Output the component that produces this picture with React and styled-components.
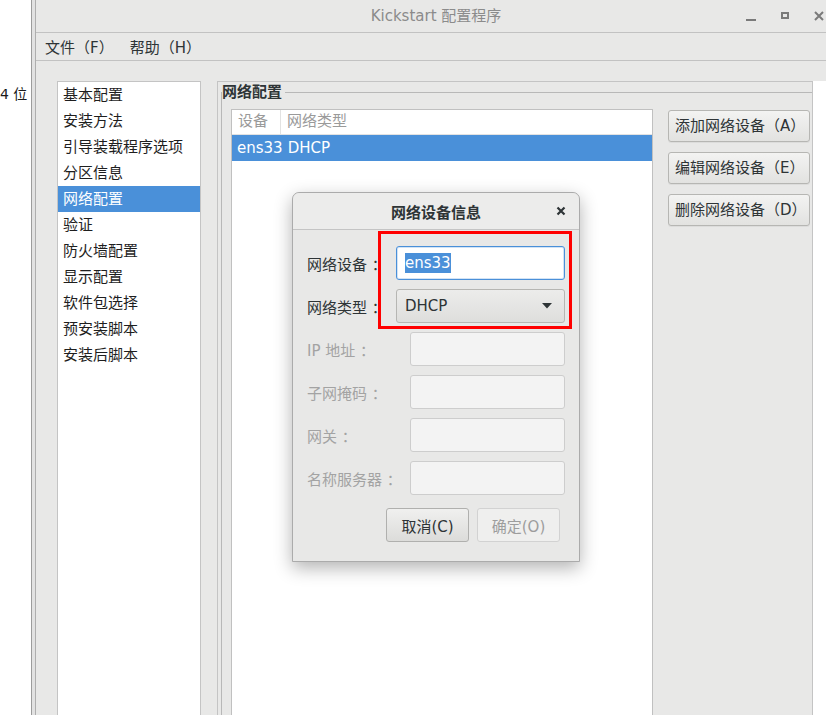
import styled, { createGlobalStyle } from 'styled-components';

const GlobalStyle = createGlobalStyle`
  html, body {
    margin: 0;
    padding: 0;
    background: #ffffff;
    overflow: hidden;
  }
  body {
    font-family: "DejaVu Sans", "Noto Sans CJK SC", sans-serif;
    font-size: 15px;
    color: #2e3436;
  }
`;

const navItems = [
  '基本配置', '安装方法', '引导装载程序选项', '分区信息', '网络配置',
  '验证', '防火墙配置', '显示配置', '软件包选择', '预安装脚本', '安装后脚本',
];

const fields = [
  { label: 'IP 地址 ：', indent: 103 },
  { label: '子网掩码 ：', indent: 103 },
  { label: '网关 ：', indent: 103 },
  { label: '名称服务器 ：', indent: 103 },
];

function App() {
  return (
    <Screen>
      <GlobalStyle />
      <Outside>
        <OutsideText>4 位</OutsideText>
      </Outside>
      <Edge />
      <Window>
        <TitleBar>
          <span />
          <Title>Kickstart 配置程序</Title>
          <Controls>
            <CtrlButton>
              <svg width="12" height="12" viewBox="0 0 12 12">
                <rect x="1" y="9" width="10" height="2" fill="#7a7a7a" />
              </svg>
            </CtrlButton>
            <CtrlButton>
              <svg width="12" height="12" viewBox="0 0 12 12">
                <rect x="3" y="3" width="6" height="5" fill="none" stroke="#7a7a7a" strokeWidth="2" />
              </svg>
            </CtrlButton>
            <CtrlButton>
              <svg width="12" height="12" viewBox="0 0 12 12">
                <path d="M2 2 L10 10 M10 2 L2 10" stroke="#7a7a7a" strokeWidth="2" />
              </svg>
            </CtrlButton>
          </Controls>
        </TitleBar>

        <MenuBar>
          <MenuItem>文件（F）</MenuItem>
          <MenuItem>帮助（H）</MenuItem>
        </MenuBar>

        <Body>
          <NavList>
            {navItems.map((item) => (
              <NavItem key={item} $active={item === '网络配置'}>{item}</NavItem>
            ))}
          </NavList>

          <Panel>
            <Frame>
              <Legend>网络配置</Legend>
              <Table>
                <HeaderRow>
                  <HeaderCell $w={49} $divider>设备</HeaderCell>
                  <HeaderCell>网络类型</HeaderCell>
                </HeaderRow>
                <Row $selected>
                  <Cell $w={49}>ens33</Cell>
                  <Cell>DHCP</Cell>
                </Row>
              </Table>
              <SideButtons>
                <SideButton>添加网络设备（A）</SideButton>
                <SideButton>编辑网络设备（E）</SideButton>
                <SideButton>删除网络设备（D）</SideButton>
              </SideButtons>
            </Frame>
          </Panel>

          <Gutter />
        </Body>
      </Window>

      <Dialog>
        <DialogHeader>
          <DialogTitle>网络设备信息</DialogTitle>
          <CloseButton>
            <svg width="10" height="10" viewBox="0 0 10 10">
              <path d="M1.5 1.5 L8.5 8.5 M8.5 1.5 L1.5 8.5" stroke="#2e3436" strokeWidth="2.2" />
            </svg>
          </CloseButton>
        </DialogHeader>

        <Form>
          <FieldRow $indent={89}>
            <FieldLabel>网络设备 ：</FieldLabel>
            <TextInput $focused>
              <Selected>ens33</Selected>
            </TextInput>
          </FieldRow>
          <FieldRow $indent={89}>
            <FieldLabel>网络类型 ：</FieldLabel>
            <Combo>
              <span>DHCP</span>
              <svg width="10" height="6" viewBox="0 0 10 6">
                <path d="M0 0 L10 0 L5 5.5 Z" fill="#2e3436" />
              </svg>
            </Combo>
          </FieldRow>
          {fields.map((f) => (
            <FieldRow key={f.label} $indent={f.indent}>
              <FieldLabel $disabled>{f.label}</FieldLabel>
              <TextInput $disabled />
            </FieldRow>
          ))}
        </Form>

        <DialogButtons>
          <DialogButton>取消(C)</DialogButton>
          <DialogButton $disabled>确定(O)</DialogButton>
        </DialogButtons>
      </Dialog>

      <Highlight />
    </Screen>
  );
}

export default App;

const Screen = styled.div`
  position: relative;
  display: flex;
  width: 826px;
  height: 715px;
  overflow: hidden;
  background: #ffffff;
`;

const Outside = styled.div`
  flex: 0 0 31px;
  background: #ffffff;
  padding-top: 83px;
  box-sizing: border-box;
`;

const OutsideText = styled.div`
  font-size: 14px;
  color: #1a1a1a;
  white-space: nowrap;
`;

const Edge = styled.div`
  flex: 0 0 3px;
  border-left: 1px solid #9c9c9c;
  border-right: 1px solid #aeaeae;
  background: #e2e2e2;
`;

const Window = styled.div`
  flex: 0 0 800px;
  display: flex;
  flex-direction: column;
  background: #e8e8e7;
`;

const TitleBar = styled.div`
  height: 32px;
  border-bottom: 1px solid #c2c2c2;
  display: grid;
  grid-template-columns: 1fr auto 1fr;
  align-items: center;
`;

const Title = styled.div`
  color: #8b8b8b;
  font-size: 15px;
  padding-bottom: 3px;
`;

const Controls = styled.div`
  justify-self: end;
  display: flex;
  align-items: center;
`;

const CtrlButton = styled.div`
  width: 34px;
  height: 28px;
  display: flex;
  align-items: center;
  justify-content: center;
`;

const MenuBar = styled.div`
  height: 27px;
  border-bottom: 1px solid #c2c2c2;
  display: flex;
  align-items: center;
  gap: 16px;
  padding-left: 9px;
`;

const MenuItem = styled.div`
  color: #2e3436;
  font-size: 15px;
`;

const Body = styled.div`
  flex: 1;
  display: flex;
  padding: 20px 0 0 21px;
  gap: 16px;
`;

const NavList = styled.div`
  flex: 0 0 144px;
  box-sizing: border-box;
  background: #ffffff;
  border: 1px solid #c4c4c4;
  border-bottom: none;
`;

const NavItem = styled.div`
  height: 26px;
  line-height: 26px;
  padding-left: 5px;
  white-space: nowrap;
  color: ${(p) => (p.$active ? '#ffffff' : '#1e1e1e')};
  background: ${(p) => (p.$active ? '#4a90d9' : 'transparent')};
`;

const Panel = styled.div`
  flex: 0 0 596px;
  box-sizing: border-box;
  border: 1px solid #c4c4c4;
  border-bottom: none;
  padding: 10px 0 0 3px;
  display: flex;
`;

const Frame = styled.div`
  position: relative;
  flex: 1;
  display: flex;
  align-items: flex-start;
  gap: 15px;
  border-top: 1px solid #b8b8b8;
  border-left: 1px solid #b8b8b8;
  padding: 16px 0 0 9px;
`;

const Legend = styled.div`
  position: absolute;
  top: -11px;
  left: 0;
  padding-right: 3px;
  background: #e8e8e7;
  font-weight: bold;
  font-size: 15px;
  color: #2e3436;
  line-height: 20px;
`;

const Table = styled.div`
  flex: 0 0 422px;
  box-sizing: border-box;
  align-self: stretch;
  background: #ffffff;
  border: 1px solid #c0c0c0;
  border-bottom: none;
`;

const HeaderRow = styled.div`
  display: flex;
  height: 24px;
  border-bottom: 1px solid #e2e2e2;
`;

const HeaderCell = styled.div`
  ${(p) => (p.$w ? `flex: 0 0 ${p.$w}px;` : 'flex: 1;')}
  box-sizing: border-box;
  padding-left: 6px;
  line-height: 22px;
  color: #9a9a9a;
  border-right: ${(p) => (p.$divider ? '1px solid #e2e2e2' : 'none')};
`;

const Row = styled.div`
  display: flex;
  height: 26px;
  line-height: 26px;
  background: ${(p) => (p.$selected ? '#4a90d9' : 'transparent')};
  color: ${(p) => (p.$selected ? '#ffffff' : '#2e3436')};
`;

const Cell = styled.div`
  ${(p) => (p.$w ? `flex: 0 0 ${p.$w}px;` : 'flex: 1;')}
  box-sizing: border-box;
  padding-left: 5px;
`;

const SideButtons = styled.div`
  flex: 0 0 142px;
  display: flex;
  flex-direction: column;
  gap: 10px;
  margin-top: 1px;
`;

const SideButton = styled.div`
  height: 32px;
  box-sizing: border-box;
  border: 1px solid #b6b6b3;
  border-radius: 3px;
  background: linear-gradient(#f3f3f2, #e2e2e0);
  box-shadow: 0 1px 0 rgba(0, 0, 0, 0.05);
  padding-left: 6px;
  line-height: 30px;
  color: #2e3436;
  white-space: nowrap;
`;

const Gutter = styled.div`
  flex: 1;
  background: #ffffff;
  margin-left: -16px;
`;

const Dialog = styled.div`
  position: absolute;
  left: 292px;
  top: 192px;
  width: 288px;
  height: 370px;
  box-sizing: border-box;
  background: #e8e8e7;
  border: 1px solid #ababab;
  border-radius: 7px 7px 0 0;
  box-shadow: 0 6px 18px rgba(0, 0, 0, 0.3);
  display: flex;
  flex-direction: column;
`;

const DialogHeader = styled.div`
  position: relative;
  height: 36px;
  border-bottom: 1px solid #c4c4c4;
  border-radius: 7px 7px 0 0;
  background: #ececeb;
  display: flex;
  align-items: center;
  justify-content: center;
`;

const DialogTitle = styled.div`
  font-weight: bold;
  font-size: 15px;
  color: #2e3436;
`;

const CloseButton = styled.div`
  position: absolute;
  right: 13px;
  top: 13px;
  display: flex;
`;

const Form = styled.div`
  display: flex;
  flex-direction: column;
  gap: 9px;
  padding: 16px 14px 0 14px;
`;

const FieldRow = styled.div`
  display: grid;
  grid-template-columns: ${(p) => p.$indent}px 1fr;
  align-items: center;
  height: 34px;
`;

const FieldLabel = styled.div`
  color: ${(p) => (p.$disabled ? '#a3a3a3' : '#2e3436')};
  white-space: nowrap;
`;

const TextInput = styled.div`
  height: 34px;
  box-sizing: border-box;
  border-radius: 3px;
  border: 1px solid ${(p) => (p.$focused ? '#4a90d9' : p.$disabled ? '#cdcdcd' : '#b8b8b8')};
  background: ${(p) => (p.$disabled ? '#f3f3f3' : '#ffffff')};
  box-shadow: ${(p) => (p.$focused ? 'inset 0 0 0 1px rgba(74,144,217,0.25)' : 'none')};
  display: flex;
  align-items: center;
  padding-left: 8px;
`;

const Selected = styled.span`
  background: #4a90d9;
  color: #ffffff;
  line-height: 20px;
`;

const Combo = styled.div`
  height: 34px;
  box-sizing: border-box;
  border-radius: 3px;
  border: 1px solid #b6b6b3;
  background: linear-gradient(#ececeb, #dededc);
  display: flex;
  align-items: center;
  justify-content: space-between;
  padding: 0 12px 0 8px;
  color: #2e3436;
`;

const DialogButtons = styled.div`
  display: flex;
  justify-content: flex-end;
  gap: 8px;
  padding: 13px 19px 0 0;
`;

const DialogButton = styled.div`
  width: 83px;
  height: 34px;
  box-sizing: border-box;
  border-radius: 3px;
  border: 1px solid ${(p) => (p.$disabled ? '#d2d2d2' : '#b0b0ae')};
  background: ${(p) => (p.$disabled ? '#efefee' : 'linear-gradient(#f0f0ef, #dcdcda)')};
  color: ${(p) => (p.$disabled ? '#9d9d9d' : '#2e3436')};
  display: flex;
  align-items: center;
  justify-content: center;
`;

const Highlight = styled.div`
  position: absolute;
  left: 378px;
  top: 231px;
  width: 194px;
  height: 98px;
  box-sizing: border-box;
  border: 3px solid #ff0000;
  pointer-events: none;
`;
